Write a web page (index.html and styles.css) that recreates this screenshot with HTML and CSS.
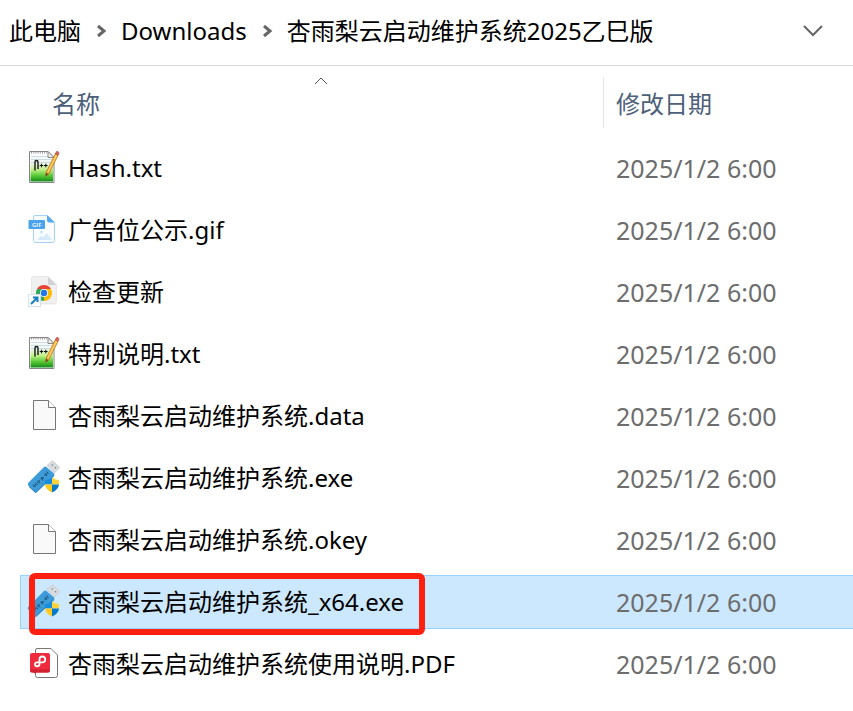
FILE: index.html
```html
<!DOCTYPE html>
<html lang="zh-CN">
<head>
<meta charset="utf-8">
<meta name="viewport" content="width=device-width, initial-scale=1">
<title>Downloads</title>
<link rel="stylesheet" href="styles.css">
</head>
<body>
<svg class="defs" aria-hidden="true">
  <defs>
    <linearGradient id="paper" x1="0" y1="0" x2="0" y2="1">
      <stop offset="0" stop-color="#ffffff"/><stop offset=".35" stop-color="#eef5ee"/><stop offset=".58" stop-color="#c3f08a"/><stop offset=".8" stop-color="#55c934"/><stop offset="1" stop-color="#148a1c"/>
    </linearGradient>
    <symbol id="notepad" viewBox="0 0 32 32" overflow="visible">
      <path d="M1.500 -.5H20L26 5.500V30.500H1.500z" fill="#fff" stroke="#858585"/>
      <path d="M2.500 1H20L25 6V29.500H2.500z" fill="url(#paper)"/>
      <path d="M3 .7H19" stroke="#999" stroke-width="1.500" stroke-dasharray="1 1.200"/>
      <path d="M3 4.500H20M3 7.500H25M3 10.500H25" stroke="#cbdbe5"/>
      <path d="M20-.5V5.500H26z" fill="#eee" stroke="#888"/>
      <path d="M7 18.500V10Q7 8.500 8.500 8.500T10 10V17" fill="none" stroke="#151515" stroke-width="1.400"/>
      <path d="M11.700 13.500h3.600M13.500 11.700v3.600M16 13.500h3.600M17.800 11.700v3.600" stroke="#151515" stroke-width="1.100"/>
      <path d="M18 20.500 27.300 1.800 30 3.500 20.600 22.200 17.500 24.500z" fill="#f4b139" stroke="#b87618" stroke-width=".7"/>
      <path d="M20.200 20 28.500 3" stroke="#ffdd86"/>
      <path d="M18 20.500 20.600 22.200 17.500 24.500z" fill="#6b4b25"/>
      <path d="M27.300 1.800 28.500-.4Q29-1 30-.4T31 1.400L30 3.500z" fill="#d96755" stroke="#a24a3e" stroke-width=".6"/>
    </symbol>
    <symbol id="gif" viewBox="0 0 32 32" overflow="visible">
      <path d="M7 1.500H19L26.500 8.500V26.500Q26.500 28.500 24.500 28.500H7.500Q5.500 28.500 5.500 26.500V3Q5.500 1.500 7 1.500z" fill="#f8fcff" stroke="#a8d3f6"/>
      <path d="M19 1 27 8.500H21Q19 8.500 19 6.500z" fill="#55a9ee"/>
      <circle cx="13.500" cy="18" r="1.500" fill="#c8e4fa"/>
      <path d="M9.500 26 13 21.500 15 23.500 18.500 19 24 26z" fill="#d5eafb"/>
      <rect y="6" x=".5" width="16.500" height="9" rx="1" fill="#4ba3eb"/>
      <text x="4" y="13" class="gif-label">GIF</text>
    </symbol>
    <symbol id="chrome" viewBox="0 0 32 32" overflow="visible">
      <path d="M5 .5H20L28.500 9V26Q28.500 28 26.500 28H5.500Q3.500 28 3.500 26V2Q3.500 .5 5 .5z" fill="#f0f0f0" stroke="#dedede" stroke-width=".6"/>
      <path d="M20 .5V7.500Q20 9 21.500 9H28.500z" fill="#d2d2d2"/>
      <path d="M16 17 9.070 13A8 8 0 0 1 22.930 13z" fill="#e94335"/>
      <path d="M16 17 22.930 13A8 8 0 0 1 16 25z" fill="#fbbd09"/>
      <path d="M16 17V25A8 8 0 0 1 9.070 13z" fill="#35a756"/>
      <path d="M16 13H22.930L19.500 19z" fill="#fbbd09"/>
      <path d="M9.070 13 12.500 19 16 13z" fill="#35a756"/>
      <circle cx="16" cy="17" r="4" fill="#fff"/><circle cx="16" cy="17" r="3.200" fill="#2377e8"/>
      <rect x=".5" y="18.500" width="12" height="12" fill="#fff" stroke="#d3e3ef"/>
      <path d="M3 28 9 22M5 21.500H9.500V26" fill="none" stroke="#147fc4" stroke-width="2"/>
    </symbol>
    <symbol id="blank" viewBox="0 0 32 32" overflow="visible">
      <path d="M5.500 .5H20.500L27.500 7.500V29.500H5.500z" fill="#f9f9f9" stroke="#777"/>
      <path d="M20.500 .5V7.500H27.500" fill="#fff" stroke="#777"/>
    </symbol>
    <symbol id="usb" viewBox="0 0 32 32" overflow="visible">
      <path d="M19 3.500 24.500-1.200 31.800 5.500 26.500 11z" fill="#d9dcde" stroke="#c3c6c8" stroke-width=".7"/>
      <path d="M23.800 2.500 24.800 3.500M27 5.200 28 6.200" stroke="#85898c" stroke-width="1.300"/>
      <path d="M.5 20.500 16 5Q17 4 18.500 5L26 11.500Q27 12.500 26 14L9 30Q8 31 6.500 30L.5 24Q-1 22 .5 20.500z" fill="#3d9bd8"/>
      <path d="M1 24.500 7.500 30.500 26 13.500" fill="none" stroke="#2a80bd"/>
      <path d="M5 22.500 7.500 25M5.500 25 8 22M7.500 21 10 23M9.500 18.500 12 21.500M9.500 21 12 18M13.500 15 15 18.500M12.500 17 16 15.500M16.500 11 19 14M16.500 13.500 19.500 11.500M18.500 9.500 20.500 11.500" stroke="#174565" stroke-width=".9"/>
      <path d="M24 15.500Q20.500 18 17 18V22.500H24z" fill="#168ddd"/>
      <path d="M24 15.500Q27.500 18 31 18V22.500H24z" fill="#ffd338"/>
      <path d="M17 22.500Q17.500 27.500 24 30.500V22.500z" fill="#ffc91f"/>
      <path d="M31 22.500Q30.500 27.500 24 30.500V22.500z" fill="#087bc6"/>
    </symbol>
    <symbol id="pdf" viewBox="0 0 32 32" overflow="visible">
      <path d="M9 .5H23L29.500 7V27.500Q29.500 29.500 27.500 29.500H9.500Q7.500 29.500 7.500 27.500V2Q7.500 .5 9 .5z" fill="#fff" stroke="#777"/>
      <path d="M3 22 7.500 26V22z" fill="#a81c28"/>
      <rect x="2" y="5" width="20" height="19.500" rx="2" fill="#ee2c3d"/>
      <path d="M2 22.500Q2 24.500 4 24.500H20Q22 24.500 22 22.500V21.500H2z" fill="#cf2131"/>
      <path d="M11.500 16V11.500Q11.500 8.500 14.300 8.500A2.900 2.900 0 0 1 14.300 14.300H9A2 2 0 0 0 9 18.300Q11.500 18.300 11.500 16" fill="none" stroke="#fff" stroke-width="1.800"/>
    </symbol>
  </defs>
</svg>

<nav class="path" aria-label="路径">
  <a href="#">此电脑</a>
  <svg class="sep" viewBox="0 0 9 12" aria-hidden="true"><path d="M1 1 7 6 1 11"/></svg>
  <a href="#">Downloads</a>
  <svg class="sep" viewBox="0 0 9 12" aria-hidden="true"><path d="M1 1 7 6 1 11"/></svg>
  <a href="#">杏雨梨云启动维护系统2025乙巳版</a>
  <button class="history" type="button" aria-label="以前的位置"><svg viewBox="0 0 20 12" aria-hidden="true"><path d="M1 1 10 10 19 1"/></svg></button>
</nav>

<main>
<table class="files">
  <colgroup><col class="col-name"><col></colgroup>
  <thead>
    <tr>
      <th aria-sort="ascending"><button class="head" type="button">名称<svg class="sort" viewBox="0 0 14 8" aria-hidden="true"><path d="M1 7 7 1 13 7"/></svg></button></th>
      <th><button class="head date-head" type="button">修改日期</button></th>
    </tr>
  </thead>
  <tbody>
    <tr><td><div class="name"><svg class="icon" aria-hidden="true"><use href="#notepad"/></svg>Hash.txt</div></td><td>2025/1/2 6:00</td></tr>
    <tr><td><div class="name"><svg class="icon" aria-hidden="true"><use href="#gif"/></svg>广告位公示.gif</div></td><td>2025/1/2 6:00</td></tr>
    <tr><td><div class="name"><svg class="icon" aria-hidden="true"><use href="#chrome"/></svg>检查更新</div></td><td>2025/1/2 6:00</td></tr>
    <tr><td><div class="name"><svg class="icon" aria-hidden="true"><use href="#notepad"/></svg>特别说明.txt</div></td><td>2025/1/2 6:00</td></tr>
    <tr><td><div class="name"><svg class="icon" aria-hidden="true"><use href="#blank"/></svg>杏雨梨云启动维护系统.data</div></td><td>2025/1/2 6:00</td></tr>
    <tr><td><div class="name"><svg class="icon" aria-hidden="true"><use href="#usb"/></svg>杏雨梨云启动维护系统.exe</div></td><td>2025/1/2 6:00</td></tr>
    <tr><td><div class="name"><svg class="icon" aria-hidden="true"><use href="#blank"/></svg>杏雨梨云启动维护系统.okey</div></td><td>2025/1/2 6:00</td></tr>
    <tr class="selected" aria-selected="true"><td><div class="name marked"><svg class="icon" aria-hidden="true"><use href="#usb"/></svg>杏雨梨云启动维护系统_x64.exe</div></td><td>2025/1/2 6:00</td></tr>
    <tr><td><div class="name"><svg class="icon" aria-hidden="true"><use href="#pdf"/></svg>杏雨梨云启动维护系统使用说明.PDF</div></td><td>2025/1/2 6:00</td></tr>
  </tbody>
</table>
</main>
</body>
</html>
```
FILE: styles.css
```css
* { box-sizing: border-box; }

body {
  margin: 0;
  background: #fff;
  color: #000;
  font: 24px/32px "Noto Sans", "Noto Sans CJK SC", sans-serif;
}

button {
  padding: 0;
  border: 0;
  background: none;
  color: inherit;
  font: inherit;
}

svg { display: block; fill: none; overflow: visible; }

.defs { position: absolute; width: 0; height: 0; }

.path {
  display: flex;
  align-items: center;
  height: 66px;
  padding: 0 30px 4px 9px;
  border-bottom: 1px solid #d9d9d9;
  white-space: nowrap;
}

.path a { color: inherit; text-decoration: none; }

.sep {
  width: 9px;
  height: 12px;
  margin: 1px 15px 0 16px;
  stroke: #666;
  stroke-width: 3;
}

.history { margin-left: auto; }

.history svg {
  width: 20px;
  height: 12px;
  stroke: #666;
  stroke-width: 2;
}

main { padding: 3px 0 0 20px; }

.files {
  width: 100%;
  table-layout: fixed;
  border-spacing: 0 8px;
}

.col-name { width: 583px; }

th {
  height: 56px;
  padding: 0;
  vertical-align: top;
  color: #4c607a;
  font-weight: 400;
}

.head {
  display: block;
  position: relative;
  width: 100%;
  height: 51px;
  padding: 2px 0 0 32px;
  text-align: left;
}

.date-head { padding-left: 12px; border-left: 1px solid #e5e5e5; }

.sort {
  position: absolute;
  top: 0;
  left: calc(50% + 2px);
  width: 14px;
  height: 8px;
  stroke: #555;
}

td {
  height: 54px;
  padding: 0 0 0 13px;
  color: #6d6d6d;
  font-size: 25px;
  white-space: nowrap;
}

td:first-child { padding: 0 0 0 8px; color: #000; font-size: 24px; }

.name { display: flex; align-items: center; gap: 8px; }

.icon { width: 32px; height: 32px; flex: none; }

.gif-label { fill: #fff; font: 600 6px "Open Sans", sans-serif; }

.selected td {
  background: #cce8ff;
  border: 1px solid #99d1ff;
  border-width: 1px 0;
}

.selected td:first-child { padding-left: 7px; border-left-width: 1px; }

.marked { position: relative; width: max-content; }

/* Callout frame around the file to run */
.marked::after {
  content: "";
  position: absolute;
  inset: -13px -21px -17px 1px;
  border: 6px solid #ff2010;
  border-radius: 6px;
}
```
